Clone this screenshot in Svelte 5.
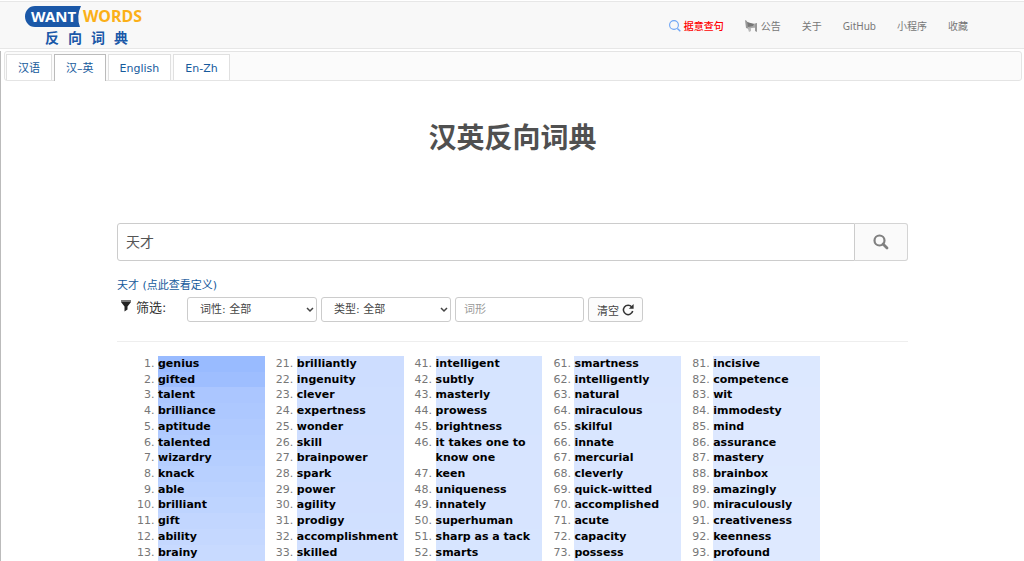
<script>
  const links = ['关于', 'GitHub', '小程序', '收藏'];
  const tabs = ['汉语', '汉–英', 'English', 'En-Zh'];
  let active = $state('汉–英');
  let query = $state('天才');
  let form = $state('');

  const columns = [
    { start: 1, words: ['genius', 'gifted', 'talent', 'brilliance', 'aptitude', 'talented', 'wizardry', 'knack', 'able', 'brilliant', 'gift', 'ability', 'brainy'] },
    { start: 21, words: ['brilliantly', 'ingenuity', 'clever', 'expertness', 'wonder', 'skill', 'brainpower', 'spark', 'power', 'agility', 'prodigy', 'accomplishment', 'skilled'] },
    { start: 41, words: ['intelligent', 'subtly', 'masterly', 'prowess', 'brightness', 'it takes one to know one', 'keen', 'uniqueness', 'innately', 'superhuman', 'sharp as a tack', 'smarts'] },
    { start: 61, words: ['smartness', 'intelligently', 'natural', 'miraculous', 'skilful', 'innate', 'mercurial', 'cleverly', 'quick-witted', 'accomplished', 'acute', 'capacity', 'possess'] },
    { start: 81, words: ['incisive', 'competence', 'wit', 'immodesty', 'mind', 'assurance', 'mastery', 'brainbox', 'amazingly', 'miraculously', 'creativeness', 'keenness', 'profound'] }
  ];

  // Relevance shades: rank, red, green
  const stops = [[1, 153, 187], [2, 158, 190], [3, 171, 198], [6, 178, 204], [9, 187, 210], [13, 200, 218], [21, 205, 221], [33, 209, 224], [41, 214, 228], [61, 216, 229], [73, 219, 231], [93, 222, 233]];

  function shade(rank) {
    let i = 0;
    while (i < stops.length - 2 && rank > stops[i + 1][0]) i++;
    const [a, r1, g1] = stops[i];
    const [b, r2, g2] = stops[i + 1];
    const t = (rank - a) / (b - a);
    return `rgb(${Math.round(r1 + (r2 - r1) * t)}, ${Math.round(g1 + (g2 - g1) * t)}, 255)`;
  }
</script>

<header class="navbar">
  <a class="logo" href="#home" aria-label="WantWords">
    <svg width="119" height="21" viewBox="0 0 119 21" aria-hidden="true">
      <path d="M10 0H56Q51 10 55 21H10C4 21 0 16 0 10.5S4 0 10 0Z" fill="#1b58a8" />
      <text class="want" x="6" y="16" fill="#fff">WANT</text>
      <text class="words" x="58" y="16" fill="#fbb018">WORDS</text>
    </svg>
    <span class="sub"><span>反</span><span>向</span><span>词</span><span>典</span></span>
  </a>
  <nav class="links">
    <a class="hot" href="#sentence">
      <svg width="12" height="12" viewBox="0 0 12 12" fill="none" stroke="#6ea5f5" aria-hidden="true">
        <circle cx="5" cy="5" r="4.4" stroke-width="1.1" /><path d="M8.4 8.4 11.3 11.3" stroke-width="1.4" />
      </svg>据意查句</a>
    <a class="notice" href="#notice">
      <svg width="13" height="13" viewBox="0 0 13 13" aria-hidden="true">
        <path d="M0 0 2 1 4 9 1 8Z" fill="#999" />
        <path d="M2 2Q7 5 12 3V8Q8 7 4 9Z" fill="#aaa" />
        <path d="M2 2 9 4 8 6 3 7Z" fill="#777" />
        <path d="M3 9 6 8 6 11 4 12Z" fill="#bbb" />
        <path d="M10 4 12 3V12L10 11Z" fill="#999" />
      </svg>公告</a>
    {#each links as link}<a href="#{link}">{link}</a>{/each}
  </nav>
</header>

<main>
  <div class="tabs" role="tablist">
    {#each tabs as tab}
      <button role="tab" aria-selected={active === tab} class:active={active === tab} onclick={() => (active = tab)}>{tab}</button>
    {/each}
  </div>

  <div class="content">
    <h1>汉英反向词典</h1>

    <form class="search" onsubmit={(e) => e.preventDefault()}>
      <input type="text" aria-label="描述" bind:value={query} />
      <button aria-label="搜索">
        <svg width="16" height="16" viewBox="0 0 16 16" fill="none" stroke="#808080" aria-hidden="true">
          <circle cx="6.5" cy="6.5" r="5" stroke-width="2.2" /><path d="M10 10 14 14" stroke-width="2.8" stroke-linecap="round" />
        </svg>
      </button>
    </form>

    <a class="definition" href="#definition">天才 (点此查看定义)</a>

    <div class="filters">
      <span class="label">
        <svg width="10" height="12" viewBox="0 0 10 12" aria-hidden="true">
          <path d="M0 0H10V2H0Z" fill="#777" /><path d="M0 2H10L6.5 6.5V9.5L3.5 11.5V6.5Z" fill="#222" />
        </svg>筛选:</span>
      <select aria-label="词性"><option>词性: 全部</option></select>
      <select aria-label="类型"><option>类型: 全部</option></select>
      <input type="text" aria-label="词形" placeholder="词形" bind:value={form} />
      <button onclick={() => (form = '')}>清空
        <svg width="12" height="12" viewBox="0 0 12 12" fill="none" aria-hidden="true">
          <path d="M9.8 3A4.7 4.7 0 1 0 10.7 7" stroke="#333" stroke-width="1.5" /><path d="M11.6 0V4.8H6.8Z" fill="#333" />
        </svg>
      </button>
    </div>

    <div class="results">
      {#each columns as column}
        <ol start={column.start}>
          {#each column.words as word, i}
            <li style:background={shade(column.start + i)}><b>{word}</b></li>
          {/each}
        </ol>
      {/each}
    </div>
  </div>
</main>

<style>
  :global(body) {
    background: #fff;
    font-family: 'DejaVu Sans', 'Noto Sans CJK SC', sans-serif;
    font-size: 11px;
  }
  a { text-decoration: none; }
  button, input, select { box-sizing: border-box; margin: 0; font-family: inherit; }
  .navbar {
    box-sizing: border-box;
    display: flex;
    justify-content: space-between;
    height: 48px;
    margin-top: 1px;
    border-top: 1px solid #e7e7e7;
    border-bottom: 1px solid #e7e7e7;
    background: #f8f8f8;
    padding: 0 56px 0 25px;
  }
  .logo { display: flex; flex-direction: column; padding-top: 4px; }
  .logo svg { display: block; }
  .logo .want { font: 700 15px 'Noto Sans', sans-serif; }
  .logo .words { font: 700 16px 'Noto Sans', sans-serif; }
  .sub {
    display: flex;
    gap: 9px;
    padding-left: 20px;
    color: #1b58a8;
    font: 700 14px/20px 'Noto Sans CJK SC', sans-serif;
  }
  .links { display: flex; align-items: center; gap: 21px; padding-top: 2px; font-family: 'Noto Sans', 'Noto Sans CJK SC', sans-serif; }
  .links a { display: flex; align-items: center; gap: 3px; color: #777; font-size: 10px; line-height: 16px; }
  .links .hot { color: #f00; font-weight: 500; }
  main { border-left: 1px solid #bbb; }
  .tabs {
    display: flex;
    gap: 2px;
    margin: 2px 2px 0 3px;
    padding: 2px 1px 0;
    border: 1px solid #e4e4e4;
    border-radius: 3px;
    background: #fbfbfb;
  }
  .tabs button {
    height: 26px;
    padding: 2px 11px 0;
    border: 1px solid #e0e0e0;
    border-bottom: 0;
    background: #fff;
    color: #165a9c;
    font-size: 11px;
    line-height: 22px;
  }
  .tabs .active { border-color: #bbb; height: 27px; margin-bottom: -1px; }
  .content { padding: 0 116px; }
  h1 {
    margin: 32px 0 0;
    color: #505050;
    font: 700 28px/46px 'Noto Sans CJK SC', sans-serif;
    text-align: center;
  }
  .search { display: flex; margin-top: 64px; }
  .search input {
    flex: 1;
    min-width: 0;
    height: 38px;
    padding: 0 8px 2px;
    border: 1px solid #ccc;
    border-radius: 3px 0 0 3px;
    color: #555;
    font-size: 14px;
  }
  .search button {
    display: grid;
    place-items: center;
    width: 53px;
    border: 1px solid #d4d4d4;
    border-left: 0;
    border-radius: 0 3px 3px 0;
    background: #fafafa;
  }
  .definition { display: block; margin-top: 17px; color: #165a9c; line-height: 16px; }
  .filters {
    display: flex;
    align-items: center;
    gap: 4px;
    padding: 3px 0 19px;
    border-bottom: 1px solid #eee;
  }
  .label { display: flex; align-items: center; gap: 5px; width: 62px; height: 18px; padding-left: 4px; color: #333; font-size: 13px; align-self: flex-start; }
  .filters select, .filters input, .filters button {
    height: 25px;
    border: 1px solid #ccc;
    border-radius: 3px;
    background: #fff;
    color: #444;
    font-size: 11px;
  }
  .filters select {
    appearance: none;
    width: 130px;
    padding: 0 0 0 12px;
    background: #fff url("data:image/svg+xml,%3Csvg xmlns='http://www.w3.org/2000/svg' width='8' height='6'%3E%3Cpath d='M1 1l3 3 3-3' fill='none' stroke='%23444' stroke-width='1.5'/%3E%3C/svg%3E") no-repeat right 2px center;
  }
  .filters input { width: 129px; padding: 0 8px; }
  .filters input::placeholder { color: #999; }
  .filters button { display: flex; align-items: center; gap: 3px; padding: 0 8px; background: #fcfcfc; }
  .results {
    display: grid;
    grid-template-columns: repeat(5, 1fr);
    padding: 14px 88px 0 9px;
    line-height: 1.43;
  }
  ol { margin: 0; padding: 0 0 0 32px; color: #777; }
  li:last-child { padding-bottom: 1px; }
  b { color: #000; }
</style>
